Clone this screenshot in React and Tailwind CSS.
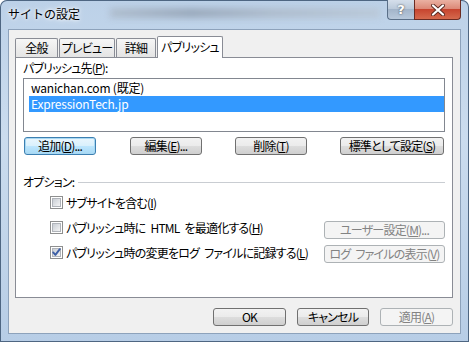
import { useState } from "react";

const btn =
  "h-[18px] flex items-center justify-center rounded-[3px] border text-[12px] leading-none whitespace-nowrap";
const normal =
  "border-[#707070] text-black bg-[linear-gradient(#f2f2f2_0%,#ebebeb_50%,#dddddd_50%,#cfcfcf_100%)]";
const focused =
  "border-[#3c7fb1] text-black shadow-[inset_0_0_0_1px_#a8d8f3] bg-[linear-gradient(#eaf6fd_0%,#d9f0fc_50%,#bee6fd_50%,#a7d9f5_100%)]";
const disabled = "border-[#adb2b5] text-[#838383] bg-[#f4f4f4]";

const Key = ({ k }) => <span className="underline">{k}</span>;
const Sp = () => <span className="inline-block w-[5px]" />;

const CheckBox = ({ id, checked }) => (
  <svg width="13" height="13" viewBox="0 0 13 13" className="shrink-0">
    <defs>
      <linearGradient id={id} x1="0" y1="0" x2="1" y2="1">
        <stop offset="0" stopColor="#c6cbd2" />
        <stop offset="1" stopColor="#f7f7f7" />
      </linearGradient>
    </defs>
    <rect x="0.5" y="0.5" width="12" height="12" fill="#fff" stroke="#8e8f8f" />
    <rect x="2.5" y="2.5" width="8" height="8" fill={`url(#${id})`} stroke="#b0b4ba" />
    {checked && (
      <path
        d="M3.2 6.4 L5.4 8.9 L9.8 3.2"
        fill="none"
        stroke="#3d5fa6"
        strokeWidth="1.9"
        strokeLinecap="round"
        strokeLinejoin="round"
      />
    )}
  </svg>
);

const Tab = ({ label, width, selected }) =>
  selected ? (
    <div
      className={`${width} ml-[1px] h-[22px] -mb-[1px] relative z-10 bg-white border border-b-0 border-[#898c95] rounded-t-[2px] flex items-start justify-center pt-[3px] text-[12px] leading-[14px] whitespace-nowrap`}
    >
      {label}
    </div>
  ) : (
    <div
      className={`${width} h-[19px] border border-b-0 border-[#898c95] rounded-t-[2px] bg-[linear-gradient(#f6f6f6,#e4e4e4)] flex items-start justify-center pt-[2px] text-[12px] leading-[14px] whitespace-nowrap`}
    >
      {label}
    </div>
  );

export default function App() {
  const [selected, setSelected] = useState(1);
  const items = ["wanichan.com (既定)", "ExpressionTech.jp"];

  return (
    <div
      className="w-[469px] h-[342px] flex flex-col overflow-hidden rounded-t-[7px] bg-[linear-gradient(180deg,#bcd1e8_0%,#cbdcee_40%,#b7cde6_100%)] shadow-[inset_0_0_0_1px_#4e6682] text-black [font-feature-settings:'palt'] tracking-[-0.8px]"
      style={{ fontFamily: '"Noto Sans CJK JP", "Noto Sans", sans-serif' }}
    >
      {/* title bar */}
      <div className="h-[29px] shrink-0 relative flex items-start">
        <div className="absolute left-[110px] top-[8px] w-[270px] h-[10px] blur-[3px] bg-[linear-gradient(90deg,#aab6c4,#8c99aa_30%,#a8b4c2_60%,#b9c5d2)] opacity-70" />
        <div className="relative pl-[8px] pt-[6px] text-[12px] leading-[16px] text-black tracking-normal [font-feature-settings:normal] [text-shadow:0_0_6px_#fff,0_0_3px_#fff]">
          サイトの設定
        </div>
        <div className="ml-auto mr-[8px] flex relative tracking-normal">
          <div className="w-[27px] h-[20px] rounded-bl-[4px] border border-t-0 border-r-0 border-[#5a6f88] bg-[linear-gradient(#d5dfeb_0%,#b9c8d9_50%,#a3b5ca_50%,#b8c9dc_100%)] flex items-center justify-center text-white text-[13px] font-bold leading-none [text-shadow:0_0_2px_#333]" style={{ fontFamily: '"DejaVu Sans", sans-serif' }}>
            ?
          </div>
          <div className="w-[47px] h-[20px] rounded-br-[4px] border border-t-0 border-[#6b2b22] bg-[linear-gradient(#eab1a2_0%,#db8573_50%,#c7452f_50%,#d56a4e_100%)] flex items-center justify-center">
            <svg width="14" height="12" viewBox="0 0 14 12">
              <path d="M2 1.5 L12 10.5 M12 1.5 L2 10.5" stroke="#5b2a22" strokeWidth="4" strokeLinecap="round" />
              <path d="M2 1.5 L12 10.5 M12 1.5 L2 10.5" stroke="#ffffff" strokeWidth="2.2" strokeLinecap="round" />
            </svg>
          </div>
        </div>
      </div>

      {/* frame + client */}
      <div className="flex h-[305px] shrink-0">
        <div className="w-[8px] shrink-0" />
        <div className="w-[453px] shrink-0 bg-[#f0f0f0] border border-[#8da2bb] flex flex-col">
          {/* tabs */}
          <div className="ml-[6px] mt-[6px] h-[21px] flex items-end">
            <Tab label="全般" width="w-[43px]" />
            <Tab label="プレビュー" width="w-[56px] ml-[1px]" />
            <Tab label="詳細" width="w-[40px] ml-[1px]" />
            <Tab label="パブリッシュ" width="w-[66px]" selected />
          </div>

          {/* tab page */}
          <div className="ml-[6px] w-[438px] h-[241px] bg-white border border-[#898c95] flex flex-col">
            <div className="ml-[7px] mt-[2px] h-[16px] text-[12px] leading-[16px] whitespace-nowrap">
              パブリッシュ先(<Key k="P" />):
            </div>
            <div className="ml-[7px] mt-[2px] w-[422px] h-[54px] border border-[#828790] bg-white pt-[1px] pl-[5px]">
              {items.map((t, i) => (
                <div
                  key={t}
                  onClick={() => setSelected(i)}
                  className={`h-[16px] pl-[2px] text-[12px] leading-[16px] whitespace-nowrap tracking-[-0.2px] ${
                    selected === i ? "bg-[#3399ff] text-white" : "text-black"
                  }`}
                >
                  {t}
                </div>
              ))}
            </div>

            <div className="ml-[8px] mt-[5px] flex">
              <button className={`${btn} ${focused} w-[72px] mr-[34px]`}>
                追加(<Key k="D" />)...
              </button>
              <button className={`${btn} ${normal} w-[72px] mr-[33px]`}>
                編集(<Key k="E" />)...
              </button>
              <button className={`${btn} ${normal} w-[72px] mr-[33px]`}>
                削除(<Key k="T" />)
              </button>
              <button className={`${btn} ${normal} w-[104px]`}>
                標準として設定(<Key k="S" />)
              </button>
            </div>

            {/* options */}
            <div className="ml-[7px] mt-[19px] w-[422px] h-[16px] flex items-center">
              <span className="text-[12px] leading-[16px] whitespace-nowrap">オプション:</span>
              <div className="flex-1 ml-[4px] border-t border-[#c9cdd2]" />
            </div>

            <div className="flex flex-col">
              <div className="h-[25px] flex items-center ml-[34px]">
                <CheckBox id="cb1" />
                <span className="ml-[3px] text-[12px] leading-[16px] whitespace-nowrap">
                  サブサイトを含む(<Key k="I" />)
                </span>
              </div>
              <div className="h-[25px] flex items-center ml-[34px] mr-[7px]">
                <CheckBox id="cb2" />
                <span className="ml-[3px] text-[12px] leading-[16px] whitespace-nowrap">
                  パブリッシュ時に<Sp />HTML<Sp />を最適化する(<Key k="H" />)
                </span>
                <button className={`${btn} ${disabled} w-[121px] ml-auto mt-[4px]`}>
                  ユーザー設定(<Key k="M" />)...
                </button>
              </div>
              <div className="h-[25px] flex items-center ml-[34px] mr-[7px]">
                <CheckBox id="cb3" checked />
                <span className="ml-[3px] text-[12px] leading-[16px] whitespace-nowrap">
                  パブリッシュ時の変更をログ<Sp />ファイルに記録する(<Key k="L" />)
                </span>
                <button className={`${btn} ${disabled} w-[121px] ml-auto mt-[2px]`}>
                  ログ<Sp />ファイルの表示(<Key k="V" />)
                </button>
              </div>
            </div>
          </div>

          {/* bottom buttons */}
          <div className="mt-[10px] flex justify-end pr-[7px] gap-[11px]">
            <button className={`${btn} ${normal} w-[73px]`}>OK</button>
            <button className={`${btn} ${normal} w-[72px]`}>キャンセル</button>
            <button className={`${btn} ${disabled} w-[73px]`}>
              適用(<Key k="A" />)
            </button>
          </div>
        </div>
        <div className="w-[8px] shrink-0" />
      </div>
    </div>
  );
}
